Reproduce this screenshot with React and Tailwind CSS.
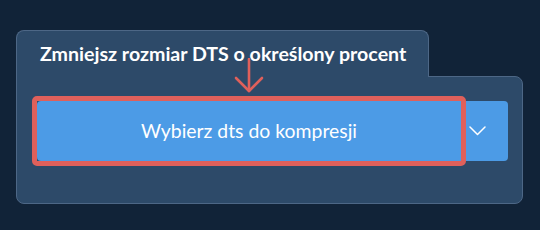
import React from 'react';

export default function App() {
    return (
        <div className="min-h-screen bg-[#112338] pt-[30px] pl-4" style={{ fontFamily: 'Lato, "Open Sans", sans-serif' }}>
            <div className="w-[507px]">
                <div className="relative z-10 -mb-px w-[413px] rounded-t-lg border border-b-0 border-[#4d6786] bg-[#2d4a69] pl-[23px] pt-[12px] pb-[12px]">
                    <h2 className="whitespace-nowrap text-[19.6px] font-bold leading-[22px] text-white">Zmniejsz rozmiar DTS o określony procent</h2>
                </div>
                <div className="rounded-b-lg rounded-tr-lg border border-[#4d6786] bg-[#2d4a69] pl-5 pr-[14px] pt-6 pb-[42px]">
                    <div className="flex h-[60px]">
                        <button className="relative flex flex-1 items-center justify-center rounded-l bg-[#4c9be6] text-[19.4px] font-normal text-white">
                            Wybierz dts do kompresji
                            <span className="absolute -inset-[5px] rounded-[5px] border-[5px] border-[#df605b]" />
                            <svg className="absolute left-1/2 top-[-43px] z-20 -translate-x-1/2" width="30" height="35" viewBox="0 0 30 35" fill="none" stroke="#df605b" strokeWidth="2.6" strokeLinecap="round" strokeLinejoin="round">
                                <path d="M15 1v32" />
                                <path d="M2 20l13 13 13-13" />
                            </svg>
                        </button>
                        <button className="flex w-[47px] items-center rounded-r bg-[#4c9be6] pl-2">
                            <svg width="17" height="10" viewBox="0 0 17 10" fill="none" stroke="white" strokeWidth="1.5" strokeLinecap="round" strokeLinejoin="round">
                                <path d="M1 1l7.5 7.5L16 1" />
                            </svg>
                        </button>
                    </div>
                </div>
            </div>
        </div>
    );
}
